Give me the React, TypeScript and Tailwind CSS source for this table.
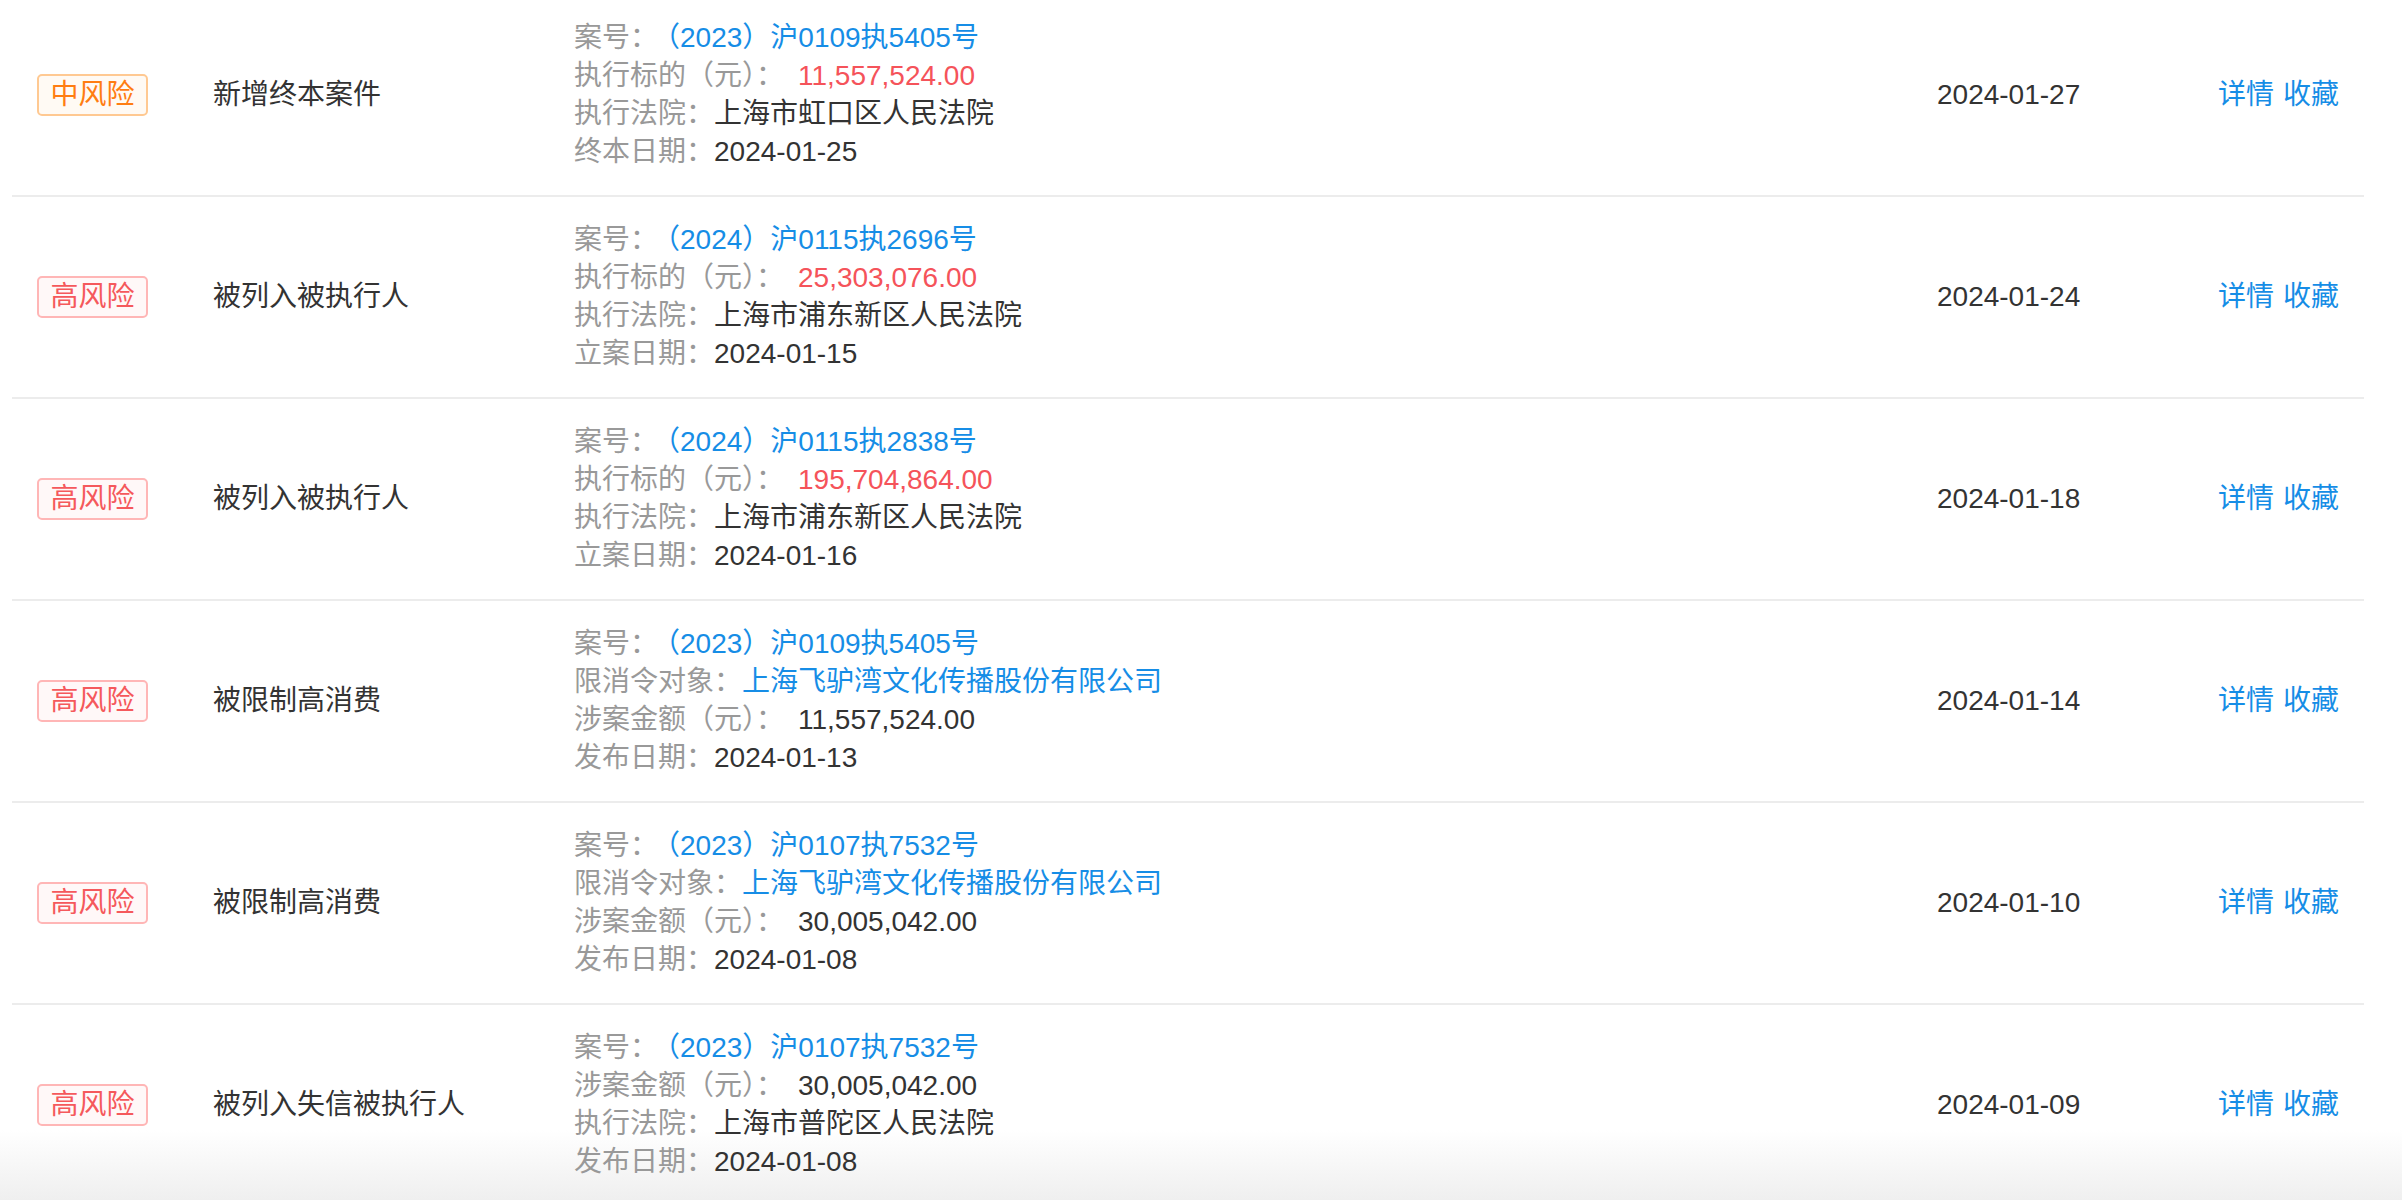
import React from 'react';

type Line = { label: string; value: string; tone?: 'blue' | 'red' | 'dark' };

interface RiskItem {
  level: '中风险' | '高风险';
  title: string;
  lines: Line[];
  date: string;
}

const items: RiskItem[] = [
  {
    level: '中风险',
    title: '新增终本案件',
    lines: [
      { label: '案号：', value: '（2023）沪0109执5405号', tone: 'blue' },
      { label: '执行标的（元）：', value: '11,557,524.00', tone: 'red' },
      { label: '执行法院：', value: '上海市虹口区人民法院' },
      { label: '终本日期：', value: '2024-01-25' },
    ],
    date: '2024-01-27',
  },
  {
    level: '高风险',
    title: '被列入被执行人',
    lines: [
      { label: '案号：', value: '（2024）沪0115执2696号', tone: 'blue' },
      { label: '执行标的（元）：', value: '25,303,076.00', tone: 'red' },
      { label: '执行法院：', value: '上海市浦东新区人民法院' },
      { label: '立案日期：', value: '2024-01-15' },
    ],
    date: '2024-01-24',
  },
  {
    level: '高风险',
    title: '被列入被执行人',
    lines: [
      { label: '案号：', value: '（2024）沪0115执2838号', tone: 'blue' },
      { label: '执行标的（元）：', value: '195,704,864.00', tone: 'red' },
      { label: '执行法院：', value: '上海市浦东新区人民法院' },
      { label: '立案日期：', value: '2024-01-16' },
    ],
    date: '2024-01-18',
  },
  {
    level: '高风险',
    title: '被限制高消费',
    lines: [
      { label: '案号：', value: '（2023）沪0109执5405号', tone: 'blue' },
      { label: '限消令对象：', value: '上海飞驴湾文化传播股份有限公司', tone: 'blue' },
      { label: '涉案金额（元）：', value: '11,557,524.00' },
      { label: '发布日期：', value: '2024-01-13' },
    ],
    date: '2024-01-14',
  },
  {
    level: '高风险',
    title: '被限制高消费',
    lines: [
      { label: '案号：', value: '（2023）沪0107执7532号', tone: 'blue' },
      { label: '限消令对象：', value: '上海飞驴湾文化传播股份有限公司', tone: 'blue' },
      { label: '涉案金额（元）：', value: '30,005,042.00' },
      { label: '发布日期：', value: '2024-01-08' },
    ],
    date: '2024-01-10',
  },
  {
    level: '高风险',
    title: '被列入失信被执行人',
    lines: [
      { label: '案号：', value: '（2023）沪0107执7532号', tone: 'blue' },
      { label: '涉案金额（元）：', value: '30,005,042.00' },
      { label: '执行法院：', value: '上海市普陀区人民法院' },
      { label: '发布日期：', value: '2024-01-08' },
    ],
    date: '2024-01-09',
  },
];

const font = { fontFamily: '"Liberation Sans", "Noto Sans CJK SC", sans-serif' };

export default function App() {
  return (
    <div className="relative h-[1200px] w-[2402px] overflow-hidden bg-white text-[28px] leading-[38px] text-[#333]" style={font}>
      {/* bottom fade, sits behind the list */}
      <div className="pointer-events-none absolute bottom-0 left-0 right-0 h-[70px] bg-gradient-to-b from-white/0 to-[#efefef]" />

      {/* watermark */}
      <div className="pointer-events-none absolute inset-0 grid grid-cols-8 grid-rows-4 text-[40px] font-bold tracking-[14px] text-black/[0.015]">
        {Array.from({ length: 32 }).map((_, i) => (
          <div key={i} className="flex items-center justify-center">
            <span className="-rotate-[55deg]">EEKZN1</span>
          </div>
        ))}
      </div>

      <div className="relative -mt-[5px] ml-[12px] w-[2352px]">
        {items.map((item, i) => (
          <RiskRow key={i} item={item} />
        ))}
      </div>
    </div>
  );
}

function RiskRow({ item }: { item: RiskItem }) {
  return (
    <div className="flex h-[202px] items-center border-b-2 border-[#ececec] pl-[25px]">
      <div className="w-[176px] shrink-0">
        <RiskBadge level={item.level} />
      </div>
      <div className="w-[361px] shrink-0">{item.title}</div>
      <div className="w-[1363px] shrink-0">
        {item.lines.map((l, j) => {
          // the source font leaves extra room round full-width brackets
          const gap = l.label.includes('（') ? 'ml-[14px]' : l.value.startsWith('（') ? 'ml-[8px]' : '';
          const tone =
            l.tone === 'blue' ? 'text-[#168de6]' : l.tone === 'red' ? 'text-[#f5535a]' : 'text-[#333]';
          return (
            <div key={j} className="whitespace-nowrap">
              <span className="text-[#999]">{l.label}</span>
              <span className={`${gap} ${tone}`}>{l.value}</span>
            </div>
          );
        })}
      </div>
      <div className="w-[281px] shrink-0">{item.date}</div>
      <div className="flex gap-[9px] text-[#168de6]">
        <span>详情</span>
        <span>收藏</span>
      </div>
    </div>
  );
}

function RiskBadge({ level }: { level: string }) {
  const mid = level === '中风险';
  return (
    <span
      className={`inline-flex h-[42px] w-[111px] items-center justify-center rounded-[5px] border-2 ${
        mid ? 'border-[#ffc992] bg-[#fffaf4] text-[#ff7d12]' : 'border-[#ffb6b6] bg-[#fff8f8] text-[#f5595c]'
      }`}
    >
      {level}
    </span>
  );
}
